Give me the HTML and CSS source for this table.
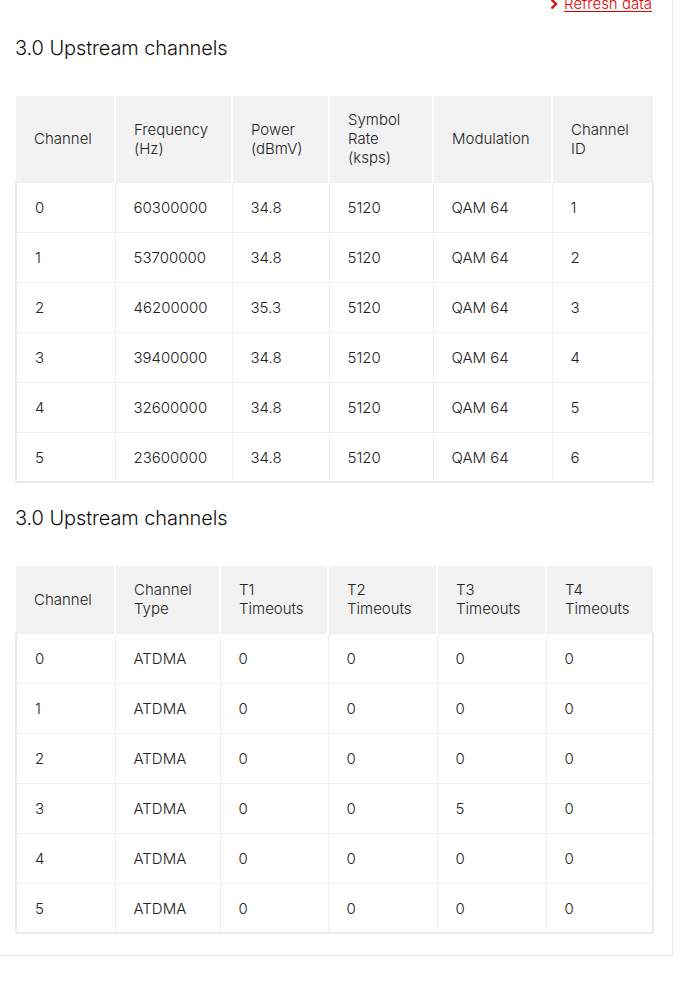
FILE: index.html
```html
<!DOCTYPE html>
<html lang="en">
<head>
<meta charset="utf-8">
<title>Upstream channels</title>
<link rel="stylesheet" href="styles.css">
</head>
<body>
<div class="card">
  <div class="refresh-row">
    <a class="refresh" href="#"><svg class="chev" width="8" height="12" viewBox="0 0 8 12"><path d="M1.5 1.5 L6 6 L1.5 10.5" fill="none" stroke="#e60000" stroke-width="2.2"/></svg><span>Refresh data</span></a>
  </div>

  <h2 class="title">3.0 Upstream channels</h2>
  <table class="grid t1">
    <colgroup>
      <col class="c1a"><col class="c1b"><col class="c1c"><col class="c1d"><col class="c1e"><col class="c1f">
    </colgroup>
    <thead>
      <tr><th>Channel</th><th>Frequency<br>(Hz)</th><th>Power<br>(dBmV)</th><th>Symbol<br>Rate<br>(ksps)</th><th>Modulation</th><th>Channel<br>ID</th></tr>
    </thead>
    <tbody>
      <tr><td>0</td><td>60300000</td><td>34.8</td><td>5120</td><td>QAM 64</td><td>1</td></tr>
      <tr><td>1</td><td>53700000</td><td>34.8</td><td>5120</td><td>QAM 64</td><td>2</td></tr>
      <tr><td>2</td><td>46200000</td><td>35.3</td><td>5120</td><td>QAM 64</td><td>3</td></tr>
      <tr><td>3</td><td>39400000</td><td>34.8</td><td>5120</td><td>QAM 64</td><td>4</td></tr>
      <tr><td>4</td><td>32600000</td><td>34.8</td><td>5120</td><td>QAM 64</td><td>5</td></tr>
      <tr><td>5</td><td>23600000</td><td>34.8</td><td>5120</td><td>QAM 64</td><td>6</td></tr>
    </tbody>
  </table>

  <h2 class="title second">3.0 Upstream channels</h2>
  <table class="grid t2">
    <colgroup>
      <col class="c2a"><col class="c2b"><col class="c2c"><col class="c2d"><col class="c2e"><col class="c2f">
    </colgroup>
    <thead>
      <tr><th>Channel</th><th>Channel<br>Type</th><th>T1<br>Timeouts</th><th>T2<br>Timeouts</th><th>T3<br>Timeouts</th><th>T4<br>Timeouts</th></tr>
    </thead>
    <tbody>
      <tr><td>0</td><td>ATDMA</td><td>0</td><td>0</td><td>0</td><td>0</td></tr>
      <tr><td>1</td><td>ATDMA</td><td>0</td><td>0</td><td>0</td><td>0</td></tr>
      <tr><td>2</td><td>ATDMA</td><td>0</td><td>0</td><td>0</td><td>0</td></tr>
      <tr><td>3</td><td>ATDMA</td><td>0</td><td>0</td><td>5</td><td>0</td></tr>
      <tr><td>4</td><td>ATDMA</td><td>0</td><td>0</td><td>0</td><td>0</td></tr>
      <tr><td>5</td><td>ATDMA</td><td>0</td><td>0</td><td>0</td><td>0</td></tr>
    </tbody>
  </table>
</div>
</body>
</html>
```

FILE: styles.css
```css
html, body {
  margin: 0;
  padding: 0;
  background: #ffffff;
}
body {
  font-family: Inter, "Liberation Sans", sans-serif;
  color: #222222;
}
.card {
  width: 637px;
  padding: 0 20px 21px 15px;
  border-right: 1px solid #e6e6e6;
  border-bottom: 1px solid #e6e6e6;
  background: #fff;
}
.refresh-row {
  display: flex;
  justify-content: flex-end;
  height: 12px;
  overflow: hidden;
}
.refresh {
  display: flex;
  align-items: center;
  gap: 6px;
  margin-top: -5px;
  color: #e60000;
  font-size: 15px;
  font-weight: 300;
  line-height: 18px;
  text-decoration: none;
}
.refresh span {
  text-decoration: underline;
  text-underline-offset: 2px;
}
.title {
  margin: 24px 0 36px 0;
  font-size: 20px;
  line-height: 24px;
  font-weight: 300;
  color: #111;
  letter-spacing: -0.1px;
}
.title.second {
  margin-top: 23px;
}
.grid {
  width: 637px;
  table-layout: fixed;
  border-collapse: collapse;
  font-size: 15px;
  line-height: 19px;
  font-weight: 300;
}
.grid th {
  background: #f2f2f2;
  font-weight: 300;
  text-align: left;
  vertical-align: middle;
  padding: 14px 10px 15px 18px;
  border-right: 2px solid #ffffff;
  color: #222;
}
.grid th:last-child {
  border-right: none;
}
.grid td {
  height: 19px;
  padding: 15px 10px 15px 18px;
  border: 1px solid #efefef;
  color: #222;
}
.grid td:first-child {
  border-left: 2px solid #ebebf0;
}
.grid td:last-child {
  border-right: 2px solid #ebebf0;
}
.grid tbody tr:last-child td {
  padding-bottom: 14px;
  border-bottom: 2px solid #ebebf0;
}
.c1a { width: 99px; }
.c1b { width: 117px; }
.c1c { width: 97px; }
.c1d { width: 104px; }
.c1e { width: 119px; }
.c1f { width: 101px; }
.c2a { width: 99px; }
.c2b { width: 105px; }
.c2c { width: 108px; }
.c2d { width: 109px; }
.c2e { width: 109px; }
.c2f { width: 107px; }
```
